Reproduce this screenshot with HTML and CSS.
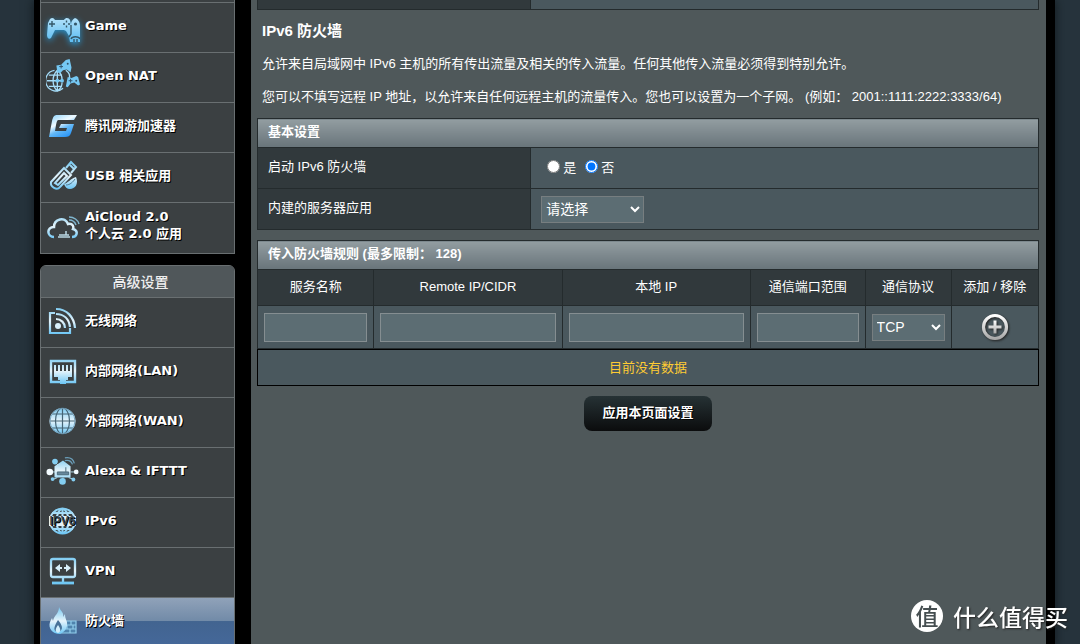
FILE: index.html
```html
<!DOCTYPE html>
<html lang="zh-CN">
<head>
<meta charset="utf-8">
<meta name="viewport" content="width=device-width, initial-scale=1">
<title>IPv6 防火墙</title>
<link rel="stylesheet" href="styles.css">
</head>
<body>
<svg class="defs" aria-hidden="true">
  <defs>
    <linearGradient id="ice" x1="0" y1="0" x2="0" y2="34" gradientUnits="userSpaceOnUse">
      <stop offset=".12" stop-color="#7fccf2"/><stop offset=".5" stop-color="#e6f4fb"/><stop offset=".88" stop-color="#6cc6f5"/>
    </linearGradient>
    <linearGradient id="blue" x1="0" y1="0" x2="0" y2="34" gradientUnits="userSpaceOnUse">
      <stop offset=".2" stop-color="#b4e2fa"/><stop offset=".85" stop-color="#62bff2"/>
    </linearGradient>
    <linearGradient id="brand" x1=".2" y1="0" x2=".8" y2="1">
      <stop offset="0" stop-color="#9bd8fb"/><stop offset=".35" stop-color="#f0faff"/><stop offset=".6" stop-color="#63b9f8"/><stop offset="1" stop-color="#1e8df5"/>
    </linearGradient>
    <linearGradient id="metal" x1="0" y1="0" x2="0" y2="1">
      <stop offset="0" stop-color="#fff"/><stop offset="1" stop-color="#a9a9a9"/>
    </linearGradient>
  </defs>
</svg>
<div class="frame">
  <nav class="sidebar" aria-label="菜单">
    <div class="menu menu-general">
      <a class="item" href="#game">
        <svg class="icon glow" viewBox="0 0 34 34"><path fill="url(#blue)" d="M4 8c2-2 4-1 5 1h9c2-3 5-2 6 0l1 5c0-4 2-6 4-7 3 1 5 4 5 8v16H24l-1-6-3-5-2-1H9l-4 8c-2 2-4 0-4-3l1-12z"/><path d="M6 10v6M3 13h6M20.500 9.500v2M20.500 14.500v2M17 13h2M22 13h2M25 14v9l-2 3M25 28c1-3 8-3 9 0M28 28v3M31 28v3" fill="none" stroke="#355869" stroke-width="1.400"/><circle cx="29.500" cy="13" r="1.600" fill="#355869"/></svg>
        <span>Game</span></a>
      <a class="item" href="#nat">
        <svg class="icon" viewBox="0 0 36 36"><g fill="none" stroke="#a5dcf8" stroke-width="1.400"><path d="M9 12A11 11 0 1 0 18 31"/><path d="M12 12c-6 6-6 16 0 22M12 12v22M12 12c3 2 5 5 5 10M12 34c3-2 5-5 5-9M3 17h14M1 23h17M3 29h14M21 12c4 3 4 5 4 8"/></g><g fill="#75c8f3"><path d="M11 7l5-1 5-5 4-1 2 9-1 5-4-3-4 1-3 3-3-1z"/><path d="M23 19l4 1 5-2 2 1 2 8-2 1-4-3-4 1-3 4-2-1z"/><circle cx="12" cy="23" r="2"/><circle cx="17" cy="23" r="2"/></g><path d="M14 8h4M16 6v4M24 23h4M26 21v4" stroke="#315369" stroke-width="1"/><circle cx="23" cy="5" r="1" fill="#315369"/><circle cx="32" cy="23" r="1" fill="#315369"/></svg>
        <span>Open NAT</span></a>
      <a class="item" href="#accelerator">
        <svg class="icon" viewBox="0 0 34 34"><path fill="url(#brand)" d="M11 6h20l-3 5H13c-2 0-2 1-3 5l-1 6h11l1-3h-8l2-4h13l-3 9c-1 3-3 4-6 4H3L6 12c1-4 2-6 5-6z"/></svg>
        <span>腾讯网游加速器</span></a>
      <a class="item" href="#usb">
        <svg class="icon" viewBox="0 0 34 34"><g fill="none" stroke="url(#ice)" stroke-width="2"><path d="M18 9l7 7-11 12c-3 4-10 0-9-5z"/><path d="M18 14l-9 10 3 2 9-9z"/><path d="M20 9l5-6 5 5-5 6M24 6l4 4"/></g><path fill="url(#ice)" d="M18 25c4-1 6-5 12-7 3 7-1 12-6 12-3 0-5-2-6-5z"/><path d="M20 26c4 0 7-3 9-6" fill="none" stroke="#4b7891"/></svg>
        <span>USB 相关应用</span></a>
      <a class="item" href="#aicloud">
        <svg class="icon" viewBox="0 0 34 34"><path fill="none" stroke="url(#ice)" stroke-width="2.500" d="M8 28C1 28 0 18 8 18c0-8 11-11 14-3 5-1 6 3 5 5 6 2 4 8-1 8"/><path d="M12 28h12M13 26h10M20 22v4" stroke="#bbd7e4" stroke-width="1.500"/><path d="M23 11c4 0 6 2 7 5M23 8c5 0 9 3 10 7" fill="none" stroke="#7fb5ce" stroke-width="1.500"/></svg>
        <span>AiCloud 2.0<br>个人云 2.0 应用</span></a>
    </div>
    <div class="menu menu-advanced">
      <h2 class="menu-title">高级设置</h2>
      <a class="item" href="#wireless">
        <svg class="icon" viewBox="0 0 34 34"><g fill="none" stroke="url(#ice)" stroke-width="2.200"><path d="M9 9H4v20h20v-5"/><path d="M10 5c11 0 18 8 19 19M10 10c8 0 13 5 14 13M10 15c5 0 9 4 9 9"/></g><circle cx="12" cy="22" r="3" fill="#d9f0fb"/></svg>
        <span>无线网络</span></a>
      <a class="item" href="#lan">
        <svg class="icon" viewBox="0 0 34 34"><path fill="none" stroke="url(#ice)" stroke-width="2.400" d="M5 7h24v21H5z"/><path fill="url(#ice)" d="M8 11h2v6h2v-6h2v6h2v-6h2v6h2v-6h2v6h2v-6h2v12h-4v3h-2v4h-6v-4h-2v-3H8z"/></svg>
        <span>内部网络(LAN)</span></a>
      <a class="item" href="#wan">
        <svg class="icon" viewBox="0 0 34 34"><circle cx="16.500" cy="17" r="13" fill="url(#ice)"/><g fill="none" stroke="#456475" stroke-width="1.200"><path d="M16.500 4v26M4 17h25M6 10h21M6 24h21"/><ellipse cx="16.500" cy="17" rx="7" ry="13"/></g><circle cx="16.500" cy="17" r="12.500" fill="none" stroke="#7aa4bd"/></svg>
        <span>外部网络(WAN)</span></a>
      <a class="item" href="#alexa">
        <svg class="icon" viewBox="0 0 36 34"><path fill="url(#ice)" d="M9 12l9-6 8 6v12H9z"/><path d="M12 21h12v-3H12zM21 18v-5" fill="#67879b" stroke="#496777"/><path d="M4 18h6M26 18h6M10 8l4 4M18 24v6M12 24l-5 2M24 24l6 2" stroke="#b9ddec" stroke-width="1"/><g fill="#83cdf1"><circle cx="9.500" cy="7" r="3"/><circle cx="17.500" cy="28" r="3.500"/><circle cx="7" cy="25.500" r="2"/><circle cx="29" cy="26" r="2"/></g><circle cx="4" cy="18" r="3.500" fill="#f3fbff"/><circle cx="32" cy="18" r="2.500" fill="#f3fbff"/><path d="M20 6c5-1 7 1 8 4M20 3c6-1 9 2 10 6" fill="none" stroke="#6b9eb9" stroke-width="1.400"/></svg>
        <span>Alexa &amp; IFTTT</span></a>
      <a class="item" href="#ipv6">
        <svg class="icon" viewBox="0 0 34 34"><g fill="none" stroke="url(#ice)" stroke-width="2"><circle cx="16.500" cy="17" r="12.500"/><ellipse cx="16.500" cy="17" rx="6" ry="12"/><path d="M16.500 4v26M6 9h21M6 25h21"/></g><path fill="#e6f2f8" d="M3 12h27v10H3z"/><text x="16.500" y="21" text-anchor="middle" class="globe-text">IPV6</text></svg>
        <span>IPv6</span></a>
      <a class="item" href="#vpn">
        <svg class="icon" viewBox="0 0 34 34"><g fill="none" stroke="url(#ice)" stroke-width="2.300"><rect x="5" y="5" width="24" height="18" rx="2"/><path d="M17 23v5"/></g><path d="M6 29h22" stroke="#71c8f4" stroke-width="2.800"/><path fill="#d8effa" d="M9 14l5-4v3h2v2h-2v3zM25 14l-5-4v3h-2v2h2v3z"/></svg>
        <span>VPN</span></a>
      <a class="item current" href="#firewall" aria-current="page">
        <svg class="icon" viewBox="0 0 34 34"><path fill="#4f84ae" stroke="#91cdec" stroke-width="1.200" d="M18 17h12v12H14zM18 21h12M16 25h14M25 17v4M21 21v4M27 21v4M24 25v4"/><path fill="url(#ice)" d="M13 3c2 5 5 5 4 10l2-3c0 6 3 7 2 12-1 4-3 6-7 8-8 0-12-6-10-12l2-4 1 3c1-6 6-7 6-14z"/><path fill="#477298" d="M12 16c4 5 6 9 1 12-6 0-6-4-1-12z"/><path fill="#d2effc" d="M12 21c3 4 3 7 0 8-3-1-3-4 0-8z"/></svg>
        <span>防火墙</span></a>
    </div>
  </nav>
  <main class="content">
    <div class="prior-row"><div></div><div></div></div>
    <h1>IPv6 防火墙</h1>
    <p>允许来自局域网中 IPv6 主机的所有传出流量及相关的传入流量。任何其他传入流量必须得到特别允许。</p>
    <p>您可以不填写远程 IP 地址，以允许来自任何远程主机的流量传入。您也可以设置为一个子网。 (例如： 2001::1111:2222:3333/64)</p>
    <form>
      <table class="grid basic">
        <colgroup><col class="c-label"><col></colgroup>
        <thead><tr><th colspan="2">基本设置</th></tr></thead>
        <tbody>
          <tr><th scope="row">启动 IPv6 防火墙</th>
            <td><div class="radios"><label><input type="radio" name="fw" value="1">是</label><label><input type="radio" name="fw" value="0" checked>否</label></div></td></tr>
          <tr><th scope="row"><label for="app">内建的服务器应用</label></th>
            <td><select id="app" class="app-select"><option>请选择</option></select></td></tr>
        </tbody>
      </table>
      <table class="grid rules">
        <colgroup><col class="c-name"><col class="c-ip"><col class="c-ip"><col class="c-port"><col class="c-proto"><col></colgroup>
        <thead><tr><th colspan="6">传入防火墙规则 (最多限制： 128)</th></tr></thead>
        <tbody>
          <tr class="heads"><th scope="col">服务名称</th><th scope="col">Remote IP/CIDR</th><th scope="col">本地 IP</th><th scope="col">通信端口范围</th><th scope="col">通信协议</th><th scope="col">添加 / 移除</th></tr>
          <tr class="fields">
            <td><input type="text" aria-label="服务名称"></td>
            <td><input type="text" aria-label="Remote IP/CIDR"></td>
            <td><input type="text" aria-label="本地 IP"></td>
            <td><input type="text" aria-label="通信端口范围"></td>
            <td><select aria-label="通信协议"><option>TCP</option></select></td>
            <td><button type="button" class="add" aria-label="添加"><svg viewBox="0 0 30 30"><circle cx="15" cy="15" r="11.500" fill="none" stroke="url(#metal)" stroke-width="3.200"/><path d="M13.500 8.500h3v5h5v3h-5v5h-3v-5h-5v-3h5z" fill="url(#metal)"/></svg></button></td>
          </tr>
        </tbody>
      </table>
      <div class="empty">目前没有数据</div>
      <button type="button" class="apply">应用本页面设置</button>
    </form>
  </main>
</div>
<div class="watermark"><span class="badge">值</span><span>什么值得买</span></div>
</body>
</html>
```
FILE: styles.css
```css
* { box-sizing: border-box; }

body {
  margin: 0;
  height: 100vh;
  overflow: hidden;
  background: #26333c;
  color: #fff;
  font: 13px/20px "Liberation Sans", "Noto Sans CJK SC", sans-serif;
}

.defs { position: absolute; width: 0; height: 0; }

.frame {
  display: flex;
  gap: 16px;
  min-height: 100vh;
  margin: 0 25px 0 34px;
  padding: 0 9px 0 6px;
  background: #000;
  box-shadow: 0 0 10px #10181c;
}

.sidebar {
  flex: 0 0 195px;
  display: flex;
  flex-direction: column;
  gap: 11px;
}

.menu { border: 1px solid #696f71; background: #3b4042; }
.menu-general { border-top: 0; padding: 2px 0 1px; }
.menu-advanced { border-radius: 6px 6px 0 0; }

.menu-title {
  margin: 0;
  padding: 6px 0 5px 6px;
  border-radius: 5px 5px 0 0;
  background: #50575a;
  color: #eee;
  font-size: 14px;
  font-weight: 500;
  text-align: center;
}

.item {
  display: flex;
  align-items: center;
  gap: 5px;
  height: 50px;
  padding: 0 5px;
  border-top: 1px solid #696f71;
  color: #fff;
  font: bold 13px/17px "DejaVu Sans", "Noto Sans CJK SC", sans-serif;
  text-decoration: none;
  text-shadow: 1px 1px 0 #000;
}

.item span { padding-bottom: 5px; }
.item.current { background: linear-gradient(#90a2b9, #728ba8 46%, #426490 48%, #45689a); }

.icon { flex: none; width: 34px; height: 34px; margin-bottom: 4px; }
.icon.glow { margin-bottom: 0; filter: drop-shadow(0 2px 3px #2990c8); }
.globe-text { font: bold 12px "Liberation Sans", sans-serif; fill: #354650; }

.content { flex: 1; min-width: 0; padding: 0 7px 0 6px; background: #4f585a; }

.prior-row {
  display: grid;
  grid-template-columns: 35% 1fr;
  height: 10px;
  border: 1px solid #242b2d;
  border-top: 0;
  background: #4a585e;
}
.prior-row div:first-child { border-right: 1px solid #242b2d; background: #31393c; }

h1 { margin: 11px 5px 13px; font-size: 15px; line-height: 20px; }
p { margin: 0 5px 13px; font-size: 13px; }
p + form { margin-top: -2px; }

.grid { width: 100%; border-collapse: collapse; table-layout: fixed; }
.grid th, .grid td { padding: 0 6px; border: 1px solid #242b2d; }
.grid td { background: #4a585e; }
.grid thead th {
  height: 29px;
  padding: 0 10px 2px;
  background: linear-gradient(#929da1, #68747a);
  text-align: left;
}
.grid tbody th { background: #31393c; font-weight: normal; }

.basic tbody th { height: 41px; padding: 0 10px 2px; text-align: left; }
.basic td { padding: 0 10px; }
.c-label { width: 35%; }
.radios { display: flex; gap: 9px; padding-left: 6px; }
.radios label { display: flex; align-items: center; gap: 3px; }
.radios input { margin: 0 0 4px; }

select, input[type="text"] {
  border: 1px solid #858e91;
  border-radius: 0;
  background: #5c6d73;
  color: #fff;
  font: 14px "Liberation Sans", "Noto Sans CJK SC", sans-serif;
}
select { display: block; height: 27px; padding: 0; border-color: #777e80; }
.app-select { width: 103px; }

.rules { margin-top: 10px; }
.c-name { width: 14.9%; }
.c-ip { width: 24.1%; }
.c-port { width: 14.7%; }
.c-proto { width: 11%; }
.grid .heads th { height: 36px; padding: 0 6px 2px; text-align: center; }
.fields td { height: 43px; }
.fields input { display: block; width: 100%; height: 29px; }
.fields select { width: 100%; }
.add { display: block; width: 30px; height: 30px; margin: 0 auto; padding: 0; border: 0; background: none; }
.add svg { display: block; filter: drop-shadow(1px 1px 1px #222); }

.empty {
  padding: 8px 0 7px;
  border: 1px solid #000;
  background: #4a585e;
  color: #fc3;
  text-align: center;
}

.apply {
  display: block;
  margin: 10px auto 0;
  padding: 7px 18px 8px;
  border: 0;
  border-radius: 8px;
  background: linear-gradient(#263235, #0b0c0d);
  color: #fff;
  font: bold 13px/20px "Liberation Sans", "Noto Sans CJK SC", sans-serif;
  text-shadow: 1px 1px 0 #000;
}

.watermark {
  position: fixed;
  right: 12px;
  bottom: 11px;
  display: flex;
  align-items: center;
  gap: 10px;
  font: 500 23px/34px "Noto Sans CJK SC", sans-serif;
  text-shadow: 1px 1px 2px #222;
}
.badge {
  width: 32px;
  height: 32px;
  border-radius: 50%;
  background: #fff;
  color: #454e50;
  line-height: 30px;
  text-align: center;
  text-shadow: none;
}
```
